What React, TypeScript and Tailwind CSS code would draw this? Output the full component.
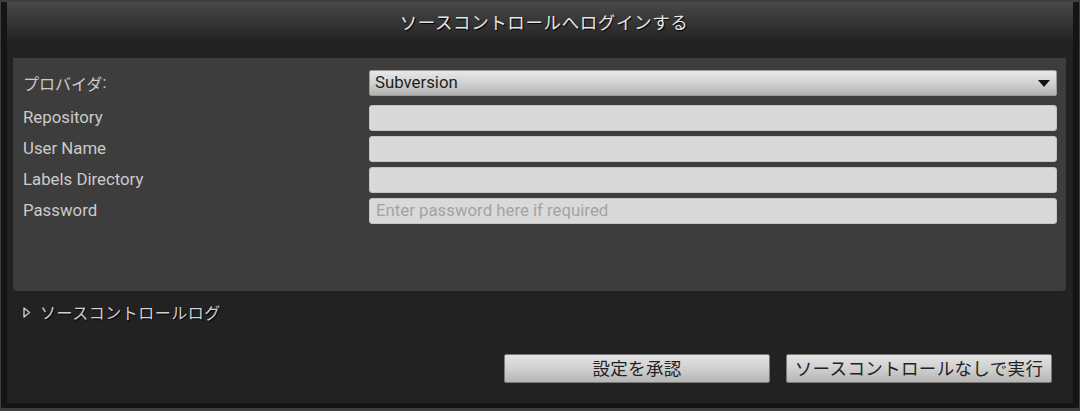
import React from "react";

const latin = { fontFamily: 'Roboto, "Noto Sans CJK JP", sans-serif' };
const jp = { fontFamily: '"Noto Sans CJK JP", Roboto, sans-serif' };

function Label({ children, isJp }: { children: React.ReactNode; isJp?: boolean }) {
  return (
    <div className={`flex h-[26px] items-center text-[#cbcbcb] ${isJp ? "text-[16px]" : "text-[16.8px]"}`} style={isJp ? jp : latin}>
      {children}
    </div>
  );
}

function Field({ placeholder }: { placeholder?: string }) {
  return (
    <div className="flex h-[26px] items-center rounded-[3px] border border-[#c4c4c4] bg-[#d9d9d9] pl-[6px] text-[16.8px] text-[#a3a3a3]" style={latin}>
      {placeholder}
    </div>
  );
}

function Btn({ children }: { children: React.ReactNode }) {
  return (
    <div
      className="flex h-[29px] w-[266px] items-center justify-center rounded-[2px] border border-[#7a7a7a] bg-gradient-to-b from-[#e4e4e4] via-[#d0d0d0] to-[#b6b6b6] text-[17.5px] tracking-[0.35px] text-[#222]"
      style={jp}
    >
      {children}
    </div>
  );
}

export default function App() {
  return (
    <div className="h-[411px] w-[1080px] bg-[#3e3e3e] px-px pb-[3px] pt-[2px]">
      <div className="flex h-full flex-col bg-[#141414] px-[6px] pb-[5px]">
        {/* Title bar */}
        <div className="flex h-[40px] items-center justify-center bg-gradient-to-b from-[#484848] via-[#363636] to-[#222222]">
          <span
            className="ml-[8px] text-[17.5px] tracking-[0.6px] text-[#e6e6e6] [text-shadow:1px_1px_1px_#000]"
            style={jp}
          >
            ソースコントロールへログインする
          </span>
        </div>
        {/* Body */}
        <div className="flex flex-1 flex-col bg-[#222222] pl-[6px] pr-[7px] pt-[16px] pb-[20px]">
          <div className="h-[233px] rounded-b-[4px] bg-[#3d3d3d] pl-[10px] pr-[9px] pt-[12px]">
            <div className="grid grid-cols-[346px_1fr] gap-y-[5px]">
              <Label isJp>
                プロバイダ<span style={latin}>:</span>
              </Label>
              <div className="mb-[4px] flex h-[26px] items-center justify-between rounded-[2px] border border-[#9a9a9a] bg-gradient-to-b from-[#e8e8e8] via-[#d2d2d2] to-[#b2b2b2] pl-[5px] pr-[6px] text-[16.8px] text-[#1e1e1e]" style={latin}>
                <span>Subversion</span>
                <svg width="12" height="7" viewBox="0 0 12 7">
                  <path d="M0 0 H12 L6 7 Z" fill="#111" />
                </svg>
              </div>
              <Label>Repository</Label>
              <Field />
              <Label>User Name</Label>
              <Field />
              <Label>Labels Directory</Label>
              <Field />
              <Label>Password</Label>
              <Field placeholder="Enter password here if required" />
            </div>
          </div>
          <div className="mt-[11px] flex h-[20px] items-center pl-[10px]">
            <svg width="8" height="11" viewBox="0 0 8 11" className="mr-[9px]">
              <path d="M1 1 L6.5 5.5 L1 10 Z" fill="none" stroke="#c8c8c8" strokeWidth="1.4" strokeLinejoin="round" />
            </svg>
            <span className="text-[16px] tracking-[0.5px] text-[#d0d0d0] [text-shadow:1px_1px_1px_#000]" style={jp}>
              ソースコントロールログ
            </span>
          </div>
          <div className="flex-1" />
          <div className="flex justify-end gap-[16px] pr-[14px]">
            <Btn>設定を承認</Btn>
            <Btn>ソースコントロールなしで実行</Btn>
          </div>
        </div>
      </div>
    </div>
  );
}
